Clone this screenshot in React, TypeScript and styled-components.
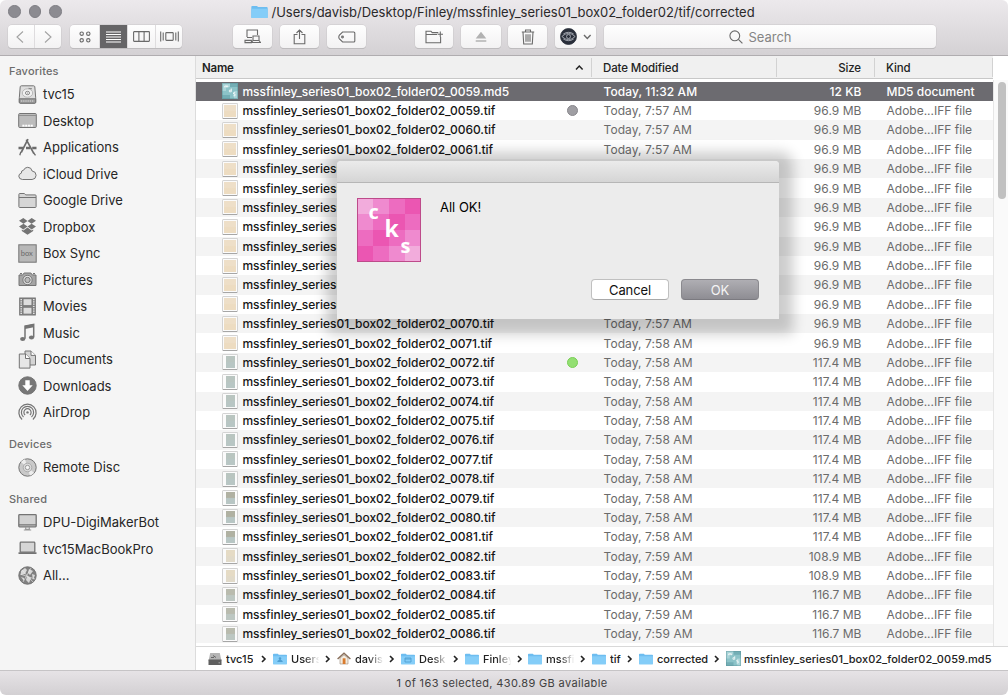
import React from "react";
import styled, { createGlobalStyle } from "styled-components";

const GlobalStyle = createGlobalStyle`
  * { box-sizing: border-box; }
  body { margin: 0; background: #fff; overflow: hidden; }
  svg { display: block; flex: none; }
`;

const Window = styled.div`
  position: relative;
  width: 1008px;
  height: 695px;
  display: flex;
  flex-direction: column;
  overflow: hidden;
  border-radius: 6px;
  background: #fff;
  font-family: Inter, "Liberation Sans", sans-serif;
  font-size: 13px;
  color: #262626;
  white-space: nowrap;
`;

const Chrome = styled.header`
  height: 56px;
  flex: none;
  border-bottom: 1px solid #b0adb0;
  background: linear-gradient(#ece9ec, #d4d1d4);
`;

const TitleRow = styled.div`
  display: flex;
  align-items: center;
  height: 24px;
  padding-left: 8px;
`;

const Lights = styled.div`
  display: flex;
  gap: 8px;
  width: 242.5px;
  padding-bottom: 1px;
`;

const Light = styled.i`
  width: 12.5px;
  height: 12.5px;
  border-radius: 50%;
  background: #8c8b91;
  border: 1px solid #7f7e84;
`;

const Title = styled.div`
  margin-left: 4px;
  font-size: 13px;
  letter-spacing: -0.01px;
  color: #2a292a;
`;

const Tools = styled.div`
  display: flex;
  height: 24px;
  padding: 1px 0 0 8px;
`;

const Group = styled.div<{ $before?: number }>`
  display: flex;
  height: 23px;
  margin-left: ${(p) => p.$before ?? 0}px;
  border-radius: 4px;
  background: linear-gradient(#fefefe, #f3f2f3);
  box-shadow: 0 0 0 0.5px #c9c7c9, 0 1px 0.5px #b3b1b3;
  overflow: hidden;
`;

const Tool = styled.button<{ $w: number; $on?: boolean; $dim?: boolean }>`
  width: ${(p) => p.$w}px;
  height: 23px;
  padding: 0;
  border: 0;
  border-left: 1px solid #dedcde;
  display: flex;
  align-items: center;
  justify-content: center;
  gap: 6px;
  color: ${(p) => (p.$on ? "#fff" : p.$dim ? "#a3a3a3" : "#6a6a6a")};
  background: ${(p) => (p.$on ? "#666567" : "transparent")};
  &:first-child { border-left: 0; }
`;

const Search = styled(Group)`
  width: 332px;
  align-items: center;
  justify-content: center;
  gap: 5px;
  padding-right: 19px;
  font-size: 13px;
  color: #858585;
`;

const Body = styled.div`
  display: flex;
  flex: 1;
  min-height: 0;
`;

const Sidebar = styled.nav`
  width: 196px;
  flex: none;
  border-right: 1px solid #dcdcdc;
  background: #f5f5f5;
  padding-top: 5px;
`;

const SideLabel = styled.div`
  height: 20px;
  line-height: 20px;
  padding-left: 9px;
  font-size: 11px;
  font-weight: 500;
  letter-spacing: 0.15px;
  color: #6c6c6c;
`;

const SideSection = styled.section`
  margin-bottom: 8.5px;
`;

const SideItem = styled.div`
  display: flex;
  align-items: center;
  height: 26.5px;
  padding: 0 0 0 18px;
  gap: 6px;
  font-size: 13px;
`;

const Main = styled.main`
  flex: 1;
  min-width: 0;
  display: flex;
  flex-direction: column;
`;

const HeadRow = styled.div`
  display: flex;
  height: 23px;
  margin-bottom: 1px;
  flex: none;
  width: 797px;
  align-items: center;
  background: #f0f0f0;
  border-bottom: 1px solid #c8c8c8;
  font-size: 11.5px;
  color: #222;
`;

const HeadCell = styled.div<{ $w: number; $left?: number; $right?: number; $bold?: boolean; $end?: boolean }>`
  width: ${(p) => p.$w}px;
  height: 19px;
  display: flex;
  align-items: center;
  justify-content: ${(p) => (p.$bold ? "space-between" : p.$end ? "flex-end" : "flex-start")};
  padding: 2px ${(p) => p.$right ?? 0}px 0 ${(p) => p.$left ?? 0}px;
  border-right: 1px solid #d2d2d2;
  font-weight: ${(p) => (p.$bold ? 600 : 500)};
  letter-spacing: ${(p) => (p.$bold ? -0.2 : -0.12)}px;
`;

const ListArea = styled.div`
  display: flex;
  flex: 1;
  min-height: 0;
  overflow: hidden;
`;

const List = styled.div`
  width: 797px;
  padding-top: 1.5px;
`;

const Row = styled.div<{ $selected?: boolean; $striped?: boolean }>`
  display: flex;
  align-items: center;
  height: 19.375px;
  font-size: 12px;
  letter-spacing: 0.08px;
  color: ${(p) => (p.$selected ? "#fff" : "#6b6b6b")};
  font-weight: ${(p) => (p.$selected ? 500 : 400)};
  background: ${(p) => (p.$selected ? "#6c6b70" : p.$striped ? "#f4f4f4" : "#fff")};
`;

const NameCell = styled.div<{ $selected?: boolean }>`
  display: flex;
  align-items: center;
  width: 407.5px;
  padding-left: 26px;
  gap: 4.5px;
  font-weight: 500;
  letter-spacing: -0.04px;
  color: ${(p) => (p.$selected ? "#fff" : "#161616")};
`;

const Tag = styled.i<{ $color: string; $edge: string }>`
  width: 11px;
  height: 11px;
  margin: 0 25.5px 0 auto;
  border-radius: 50%;
  border: 1px solid ${(p) => p.$edge};
  background: ${(p) => p.$color};
`;

const DateCell = styled.div`
  width: 160px;
`;

const SizeCell = styled.div`
  width: 98px;
  text-align: right;
  letter-spacing: 0.04px;
`;

const KindCell = styled.div`
  margin-left: 25px;
  letter-spacing: 0;
`;

const Thumb = styled.i`
  width: 16px;
  height: 16px;
  flex: none;
  display: flex;
  align-items: center;
  justify-content: center;
  background: #fbfbfb;
  border: 1px solid #d3d3d3;
  border-bottom-color: #a6a6a6;
  border-radius: 1.5px;
`;

const Page = styled.b<{ $w: number; $from: string; $to: string }>`
  width: ${(p) => p.$w}px;
  height: 12px;
  background: linear-gradient(${(p) => p.$from} 45%, ${(p) => p.$to} 55%);
`;

const ScrollTrack = styled.div`
  width: 15px;
  padding: 2px 3px 0 4px;
  border-left: 1px solid #e6e6e6;
  background: #fafafa;
`;

const ScrollThumb = styled.div`
  height: 117px;
  width: 8px;
  border-radius: 4px;
  background: #c1c1c1;
`;

const PathBar = styled.div`
  height: 24px;
  flex: none;
  display: flex;
  align-items: center;
  padding-left: 12px;
  border-top: 1px solid #d9d9d9;
  background: #fff;
  font-size: 11px;
  font-weight: 500;
  color: #222;
`;

const Crumb = styled.div<{ $w: number }>`
  width: ${(p) => p.$w}px;
  flex: none;
  display: flex;
  align-items: center;
  gap: 4px;
  &:last-child { gap: 3px; letter-spacing: 0.04px; }
`;

const CrumbText = styled.span<{ $fade?: boolean }>`
  flex: ${(p) => (p.$fade ? "0 0 30px" : "none")};
  overflow: hidden;
  mask-image: ${(p) => (p.$fade ? "linear-gradient(90deg, #000 45%, transparent 95%)" : "none")};
`;

const CrumbArrow = styled.span`
  margin: 0 6px 0 auto;
`;

const StatusBar = styled.footer`
  height: 25px;
  flex: none;
  display: flex;
  align-items: center;
  justify-content: center;
  padding-right: 4px;
  border-top: 1px solid #c6c4c6;
  background: linear-gradient(#e6e3e6, #d3d0d3);
  font-size: 11px;
  letter-spacing: 0.36px;
  color: #404040;
`;

const Dialog = styled.div`
  position: absolute;
  left: 337px;
  top: 161px;
  width: 442px;
  height: 158px;
  display: flex;
  flex-direction: column;
  border-radius: 4px 4px 0 0;
  background: #ececec;
  box-shadow: 2px 3px 13px 12px rgba(0, 0, 0, 0.2);
`;

const DialogBar = styled.div`
  height: 22px;
  flex: none;
  border-radius: 4px 4px 0 0;
  border-bottom: 1px solid #b6b6b6;
  background: linear-gradient(#ebebeb, #d5d5d5);
`;

const DialogContent = styled.div`
  display: flex;
  align-items: flex-start;
  gap: 19px;
  padding: 15px 20px 0;
`;

const Message = styled.div`
  padding-top: 1px;
  font-size: 13px;
  color: #000;
`;

const DialogActions = styled.div`
  display: flex;
  justify-content: flex-end;
  gap: 12px;
  margin: auto 20px 19px 0;
`;

const PushButton = styled.button<{ $primary?: boolean }>`
  width: 78px;
  height: 21px;
  padding: 0;
  border: 1px solid ${(p) => (p.$primary ? "#8a898e" : "#c0c0c0")};
  border-bottom-color: ${(p) => (p.$primary ? "#7b7a80" : "#a9a9a9")};
  border-radius: 4px;
  font: 400 13px Inter, sans-serif;
  letter-spacing: -0.1px;
  color: ${(p) => (p.$primary ? "#f4f4f4" : "#111")};
  background: ${(p) => (p.$primary ? "linear-gradient(#afaeb3, #8e8d93)" : "#fff")};
`;

const shades = ["#f2acdc", "#ef8acf", "#ed6cc0", "#eb56b2"];
const tiles = [0, 1, 2, 3, 1, 2, 3, 2, 2, 3, 2, 1, 3, 2, 1, 0];

const AppBadge = () => (
  <svg width="64" height="64" viewBox="0 0 64 64">
    {tiles.map((t, i) => (
      <rect key={i} x={(i % 4) * 16} y={Math.floor(i / 4) * 16} width="16" height="16" fill={shades[t]} shapeRendering="crispEdges" />
    ))}
    <rect x=".5" y=".5" width="63" height="63" fill="none" stroke="#bd4b8a" />
    <g fill="#fff" fontFamily="'Open Sans', sans-serif" fontWeight="700" fontSize="20">
      <text x="11.5" y="20.5">c</text>
      <text x="27.5" y="38.5" fontSize="23">k</text>
      <text x="43.5" y="54.5">s</text>
    </g>
  </svg>
);

const line = { fill: "none", stroke: "currentColor", strokeWidth: 1.1 };

const Folder = ({ mark }: { mark?: string }) => (
  <svg width={mark === "title" ? 17 : 14} height={mark === "title" ? 14 : 12} viewBox="0 0 14 12">
    <path d="M0 1.6Q0 .8.8.8h4l1 1h7.4q.8 0 .8.8v8q0 .6-.6.6H.6q-.6 0-.6-.6z" fill="#6dbdf0" />
    <path d="M0 3.2h14v7.5q0 .5-.6.5H.6q-.6 0-.6-.5z" fill="#84cdf8" />
    {mark === "user" && <path d="M7 4.2a1.2 1.2 0 0 1 .6 2.3l2 1.5v1H4.4v-1l2-1.5A1.2 1.2 0 0 1 7 4.2" fill="#4f9fd3" />}
    {mark === "desk" && <path d="M4 5h6v4H4zM4 6h6" fill="none" stroke="#4f9fd3" strokeWidth=".9" />}
  </svg>
);

const Md5 = ({ size = 16 }: { size?: number }) => (
  <svg width={size} height={size} viewBox="0 0 16 16">
    <path fill="#8cc3c8" d="M0 0h16v16H0z" />
    <path fill="#a9d4d8" d="M0 0h8v4H4v4H0zM12 8h4v8h-4z" />
    <path fill="#73aeb5" d="M8 0h8v4H8zM0 12h8v4H0z" />
    <path d="M2.8 4.5V3h3v1.5M4.3 3v1.5M9.3 5.5v3.3H7.4V7.2h1.9M13.2 9.7h-1.7V11h1.5v1.8h-1.7" fill="none" stroke="#fff" strokeWidth=".8" />
    <path fill="none" stroke="#5b949b" strokeWidth=".6" d="M.3.3h15.4v15.4H.3z" />
  </svg>
);

const DiskSmall = () => (
  <svg width="14" height="14" viewBox="0 0 14 14">
    <path d="M2.2 1h9.6l1.7 8H.5z" fill="#b4b4b4" />
    <path d="M.5 7.5h13V13H.5z" fill="#5f5f5f" />
    <path d="M5 3.5l3 2M3 5.5h3" stroke="#666" />
    <path d="M10.5 10.8h1.5" stroke="#aaa" />
  </svg>
);

const House = () => (
  <svg width="14" height="13" viewBox="0 0 14 13">
    <path d="M3 6v6h8V6L7 3z" fill="#f3ece0" stroke="#9b8c78" strokeWidth=".6" />
    <path d="M.6 7L7 1.2 13.4 7" fill="none" stroke="#8a705c" strokeWidth="1.5" />
    <path d="M5.7 6.3h2.8V12H5.7z" fill="#d97b2e" />
  </svg>
);

const SideGlyph = ({ name }: { name: string }) => {
  const g = "#747474";
  const common = { width: 19, height: 19, viewBox: "0 0 19 19", fill: "none", stroke: g, strokeWidth: 1 };
  switch (name) {
    case "disk":
      return <svg {...common}><path d="M3.4.8h12.2q1 0 1.2 1l.9 11v4.4q0 1-1 1H2.3q-1 0-1-1v-4.4l.9-11q.2-1 1.2-1z" fill="#dedede" /><path d="M1.3 13.8h16.4v3.4q0 1-1 1H2.3q-1 0-1-1z" fill="#9d9d9d" /><ellipse cx="9.5" cy="8" rx="5.2" ry="4.2" fill="#f0f0f0" stroke="#aaa" strokeWidth=".8" /><ellipse cx="9.5" cy="8" rx="2.1" ry="1.7" strokeWidth=".8" /><circle cx="9.5" cy="8" r=".5" fill={g} stroke="none" /><path d="M3 16h13" stroke="#ddd" strokeDasharray="1.2 1" /><path d="M10.5 3.3l3.5.5" stroke="#888" /></svg>;
    case "desktop":
      return <svg {...common}><rect x=".7" y="2.5" width="17.6" height="14" rx="1" fill="#bcbcbc" /><path d="M1 4.5h17" stroke="#8f8f8f" /><path d="M4 16v-2.2h11V16" fill="#cfcfcf" stroke="none" /><path d="M4.5 14.6h10.5" stroke="#fff" strokeWidth="1.8" strokeDasharray="1.8 1" /></svg>;
    case "apps":
      return <svg {...common} strokeWidth="1.7" stroke="#6c6c6c"><path d="M10 1.2L3.2 14.5M8.3 1.6l7.6 14" /><path d="M.5 10h4.7M8 10h4.2M14.2 10h4.3" strokeWidth="2.3" /><path d="M2.8 14l-1 3.2M15.7 15l1.8 2.3" strokeWidth="1.3" /></svg>;
    case "cloud":
      return <svg {...common}><path d="M4.4 15.5Q.9 15.2.8 12.2q.1-2.5 2.5-3Q3 6.4 5.7 6.1q.9-2.6 4-2.8 3.7 0 4.4 3.7 4 .5 4 4.3-.2 4-4 4.2z" fill="#e7e7e7" /></svg>;
    case "folder":
      return <svg {...common}><path d="M.9 15.7V3.4q0-.9.9-.9h4.6l1.3 1.4h9.5q.9 0 .9.9v10.9q0 .8-.8.8H1.7q-.8 0-.8-.8z" fill="#d6d6d6" /><path d="M1 6.5h17" /></svg>;
    case "dropbox":
      return <svg {...common} stroke="none" fill="#747474"><path d="M5.3 1l4.2 3-4 2.7L1 3.8zM13.7 1L18 3.8l-4.4 2.9-4.1-2.7zM1 9.6l4.5-2.9 4 2.9-4.2 2.8zM13.6 6.7L18 9.6l-4.3 2.8-4.2-2.8zM9.5 10.6l4.2 2.8 1.5-.8v1.5l-5.7 3.6-5.7-3.6v-1.5l1.5.8z" /></svg>;
    case "box":
      return <svg {...common}><rect x=".8" y=".8" width="17.4" height="17.4" fill="#b8b8b8" /><text x="2.8" y="12" fontSize="7.5" fontFamily="Lato, sans-serif" fill="#696969" stroke="none">box</text></svg>;
    case "camera":
      return <svg {...common}><path d="M1 5h3.6l1.5-2h6.8l1.5 2H18v10.5H1z" fill="#a5a5a5" /><circle cx="9.5" cy="10" r="4.6" fill="#ececec" /><circle cx="9.5" cy="10" r="2.7" fill="#b9b9b9" /><path d="M2 3.7h2M15 3.7h2" strokeWidth="1.2" /></svg>;
    case "film":
      return <svg {...common}><rect x="1.7" y="1" width="15.6" height="17" fill="#868686" /><path d="M5 1.7h9v7H5zM5 10.2h9v7H5z" fill="#ddd" /><path d="M3.2 2v15M15.8 2v15" stroke="#eee" strokeWidth="1.4" strokeDasharray="1.2 1.1" /></svg>;
    case "music":
      return <svg {...common} strokeWidth="1.5"><path d="M7 15.7V3.2l8.7-1.7v12.7" /><path d="M7 2.7l8.7-1.8v3.3L7 6z" fill={g} stroke="none" /><ellipse cx="4.7" cy="16" rx="2.6" ry="2.1" fill={g} stroke="none" /><ellipse cx="13.5" cy="14.5" rx="2.6" ry="2.1" fill={g} stroke="none" /></svg>;
    case "docs":
      return <svg {...common}><path d="M7 1h6l4.5 4.3V15H7z" fill="#d4d4d4" /><path d="M13 1v4.4h4.5" fill="#fff" /><path d="M1.3 4h6.2L12 8.4v9.7H1.3z" fill="#e6e6e6" /><path d="M7.5 4v4.5H12" fill="#fff" /></svg>;
    case "download":
      return <svg {...common}><circle cx="9.5" cy="9.5" r="8.7" fill="#777" /><path d="M7.3 4.2h4.4v5h3L9.5 15 4.3 9.2h3z" fill="#fff" stroke="none" /></svg>;
    case "airdrop":
      return <svg {...common} strokeWidth="1.2"><path d="M4.1 16.5a8.6 8.6 0 1 1 10.8 0" /><path d="M5.5 14a6.1 6.1 0 1 1 8 0" /><path d="M7.1 12a3.6 3.6 0 1 1 4.8 0" /><circle cx="9.5" cy="9.4" r="1.2" fill={g} stroke="none" /></svg>;
    case "disc":
      return <svg {...common}><circle cx="9.5" cy="9.5" r="8.7" fill="#c9c9c9" /><path d="M9.5 9.5L3 4a8.6 8.6 0 0 1 4-2.7zM9.5 9.5l6.6 5.3a8.6 8.6 0 0 1-4.2 2.8z" fill="#ededed" stroke="none" /><circle cx="9.5" cy="9.5" r="4.3" fill="#ddd" stroke="#aaa" /><circle cx="9.5" cy="9.5" r="2.2" fill="#f5f5f5" stroke="#999" /></svg>;
    case "display":
      return <svg {...common}><rect x=".8" y="1.6" width="17.4" height="12.2" rx=".8" fill="#d2d2d2" strokeWidth="1.3" /><path d="M1 11.8h17" strokeWidth="1.3" /><path d="M7.7 14v2.3h3.6V14M5.8 17h7.4" stroke="#999" strokeWidth="1.2" /></svg>;
    case "laptop":
      return <svg {...common}><rect x="2.2" y="3.2" width="14.6" height="10" rx=".8" fill="#d6d6d6" strokeWidth="1.3" /><path d="M.5 14.2h18" strokeWidth="1.8" /></svg>;
    default:
      return <svg {...common}><circle cx="9.5" cy="9.5" r="8.7" fill="#818181" /><path d="M3 5l4-3 2 2-2 4-4 1zM11 3l4 2-3 4-2-2zM9 10l4 2-2 5-3-3zM14 8l3 1-2 5zM3 11l3 1v3z" fill="#d8d8d8" stroke="none" /><path d="M2 8l15 5M13 2L5 16M4 4l11 12" stroke="#ededed" strokeWidth=".6" /></svg>;
  }
};

const favorites = [
  ["disk", "tvc15"], ["desktop", "Desktop"], ["apps", "Applications"], ["cloud", "iCloud Drive"],
  ["folder", "Google Drive"], ["dropbox", "Dropbox"], ["box", "Box Sync"], ["camera", "Pictures"],
  ["film", "Movies"], ["music", "Music"], ["docs", "Documents"], ["download", "Downloads"], ["airdrop", "AirDrop"],
];
const sections: [string, string[][]][] = [
  ["Favorites", favorites],
  ["Devices", [["disc", "Remote Disc"]]],
  ["Shared", [["display", "DPU-DigiMakerBot"], ["laptop", "tvc15MacBookPro"], ["globe", "All..."]]],
];

const prefix = "mssfinley_series01_box02_folder02_00";
const files = Array.from({ length: 28 }, (_, i) => {
  const n = 59 + i;
  return {
    name: `${prefix}${n}.tif`,
    date: `Today, ${n < 71 ? "7:57" : n < 82 ? "7:58" : "7:59"} AM`,
    size: n < 72 ? "96.9 MB" : n < 82 ? "117.4 MB" : n < 84 ? "108.9 MB" : "116.7 MB",
    tag: n === 59 ? ["#9f9ea3", "#88878c"] : n === 72 ? ["#93df72", "#79cf55"] : null,
    w: n < 72 ? 12 : 9,
    from: n < 72 ? "#eedfc8" : n < 79 ? "#b9c5c0" : n < 82 ? "#b0b1a2" : n < 84 ? "#e5dbc5" : "#b9bbae",
    to: n < 72 ? "#eddcc1" : n < 82 ? "#b8c6c4" : n < 84 ? "#e1dac9" : "#bdc7c2",
  };
});

const Chevron = ({ d, w = 8, h = 8, s = 1.5 }: { d: string; w?: number; h?: number; s?: number }) => (
  <svg width={w} height={h} viewBox={`0 0 ${w} ${h}`} fill="none" stroke="currentColor" strokeWidth={s}><path d={d} /></svg>
);

const crumbs: [React.ReactNode, string, number, boolean][] = [
  [<DiskSmall />, "tvc15", 65, false],
  [<Folder mark="user" />, "Users", 64, true],
  [<House />, "davis", 64, true],
  [<Folder mark="desk" />, "Desk", 64, true],
  [<Folder />, "Finley", 63, true],
  [<Folder />, "mssfi", 64, true],
  [<Folder />, "tif", 47, false],
  [<Folder />, "corrected", 87, false],
  [<Md5 size={15} />, `${prefix}59.md5`, 270, false],
];

export default function App() {
  return (
    <Window>
      <GlobalStyle />
      <Chrome>
        <TitleRow>
          <Lights><Light /><Light /><Light /></Lights>
          <Folder mark="title" />
          <Title>/Users/davisb/Desktop/Finley/mssfinley_series01_box02_folder02/tif/corrected</Title>
        </TitleRow>
        <Tools>
          <Group>
            <Tool $w={26} $dim><Chevron d="M8 1.5L2 7l6 5.5" w={12} h={14} s={1.1} /></Tool>
            <Tool $w={27} $dim><Chevron d="M3 1.5L9 7l-6 5.5" w={12} h={14} s={1.1} /></Tool>
          </Group>
          <Group $before={9}>
            <Tool $w={29}>
              <svg width="12" height="12" viewBox="0 0 12 12" {...line}><circle cx="2.7" cy="2.7" r="1.7" /><circle cx="9.3" cy="2.7" r="1.7" /><circle cx="2.7" cy="9.3" r="1.7" /><circle cx="9.3" cy="9.3" r="1.7" /></svg>
            </Tool>
            <Tool $w={28} $on>
              <svg width="15" height="12" viewBox="0 0 15 12" {...line}><path d="M0 1h15M0 3.5h15M0 6h15M0 8.5h15M0 11h15" /></svg>
            </Tool>
            <Tool $w={28}>
              <svg width="17" height="11" viewBox="0 0 17 11" {...line}><rect x=".6" y=".6" width="15.8" height="9.8" rx=".6" /><path d="M5.9.6v9.8M11.1.6v9.8" /></svg>
            </Tool>
            <Tool $w={27}>
              <svg width="19" height="11" viewBox="0 0 19 11" {...line}><path d="M.7.5v10M3.2 1.5v8M15.8 1.5v8M18.3.5v10" /><rect x="5.8" y="1.6" width="7.4" height="7.8" rx=".6" /></svg>
            </Tool>
          </Group>
          <Group $before={51}><Tool $w={39}>
            <svg width="17" height="15" viewBox="0 0 17 15" {...line}><path d="M3 8V1h10.5v5M3 8.5H8M1 11.4h6.4v2.2H1z" /><path d="M9 7h6v4.5H9zM7.5 13.5h9l-1.5-2H9z" /></svg>
          </Tool></Group>
          <Group $before={8}><Tool $w={39}>
            <svg width="13" height="16" viewBox="0 0 13 16" {...line}><path d="M4.5 5.5H1.2v9.3h10.6V5.5H8.5M6.5 10V1M3.5 4l3-3 3 3" /></svg>
          </Tool></Group>
          <Group $before={8}><Tool $w={39}>
            <svg width="18" height="12" viewBox="0 0 18 12" {...line}><path d="M4.6 1h11.2q1 0 1 1v8q0 1-1 1H4.6L1.2 7.6Q.4 6 1.2 4.4z" /><circle cx="4.5" cy="6" r=".9" /></svg>
          </Tool></Group>
          <Group $before={49}><Tool $w={38}>
            <svg width="18" height="14" viewBox="0 0 18 14" {...line}><path d="M13.3 2.6H7.2L6 1.2H1v11.5h14.6V7M1 4.5h11M15.3 1.5v5.4M12.6 4.2H18" /></svg>
          </Tool></Group>
          <Group $before={8}><Tool $w={40}>
            <svg width="12" height="12" viewBox="0 0 12 12" fill="#b2b2b2"><path d="M6 .8l5.3 6.7H.7zM.7 9.3h10.6v1.5H.7z" /></svg>
          </Tool></Group>
          <Group $before={7}><Tool $w={39}>
            <svg width="14" height="16" viewBox="0 0 14 16" {...line}><path d="M.8 3h12.4M4.5 3V1h5v2M2 3l.7 12h8.6L12 3M5 5.3v7.4M7 5.3v7.4M9 5.3v7.4" /></svg>
          </Tool></Group>
          <Group $before={8}><Tool $w={41}>
            <svg width="17" height="17" viewBox="0 0 17 17" fill="none" stroke="#b9bdc5" strokeWidth=".8"><circle cx="8.5" cy="8.5" r="8" fill="#292e3a" stroke="#292e3a" /><path d="M1.8 8.5q6.7-6.2 13.4 0-6.7 6.2-13.4 0zM3.3 6Q8.5 2.6 13.7 6M3.3 11q5.2 3.4 10.4 0" /><circle cx="8.5" cy="8.5" r="2" /></svg>
            <Chevron d="M1 2l3.3 3.5L7.6 2" w={9} h={7} s={1.4} />
          </Tool></Group>
          <Search $before={8}>
            <svg width="14" height="14" viewBox="0 0 14 14" fill="none" stroke="#6a6a6a" strokeWidth="1.1"><circle cx="5.8" cy="5.8" r="4.9" /><path d="M9.4 9.4l4 4" /></svg>
            Search
          </Search>
        </Tools>
      </Chrome>
      <Body>
        <Sidebar>
          {sections.map(([label, items]) => (
            <SideSection key={label}>
              <SideLabel>{label}</SideLabel>
              {items.map(([icon, text]) => (
                <SideItem key={text}><SideGlyph name={icon} />{text}</SideItem>
              ))}
            </SideSection>
          ))}
        </Sidebar>
        <Main>
          <HeadRow>
            <HeadCell $w={396} $left={6} $right={7} $bold>Name<Chevron d="M1 5.5L4.3 2l3.3 3.5" w={9} h={8} /></HeadCell>
            <HeadCell $w={185} $left={11}>Date Modified</HeadCell>
            <HeadCell $w={98} $right={13} $end>Size</HeadCell>
            <HeadCell $w={118} $left={11}>Kind</HeadCell>
          </HeadRow>
          <ListArea>
            <List>
              <Row $selected>
                <NameCell $selected><Md5 />{prefix}59.md5</NameCell>
                <DateCell>Today, 11:32 AM</DateCell>
                <SizeCell>12 KB</SizeCell>
                <KindCell>MD5 document</KindCell>
              </Row>
              {files.map((f, i) => (
                <Row key={f.name} $striped={i % 2 === 1}>
                  <NameCell>
                    <Thumb><Page $w={f.w} $from={f.from} $to={f.to} /></Thumb>
                    {f.name}
                    {f.tag && <Tag $color={f.tag[0]} $edge={f.tag[1]} />}
                  </NameCell>
                  <DateCell>{f.date}</DateCell>
                  <SizeCell>{f.size}</SizeCell>
                  <KindCell>Adobe...IFF file</KindCell>
                </Row>
              ))}
            </List>
            <ScrollTrack><ScrollThumb /></ScrollTrack>
          </ListArea>
          <PathBar>
            {crumbs.map(([icon, text, w, fade], i) => (
              <Crumb key={i} $w={w}>
                {icon}
                <CrumbText $fade={fade}>{text}</CrumbText>
                {i < 8 && <CrumbArrow><Chevron d="M1 1l3 3-3 3" w={6} h={8} s={1.6} /></CrumbArrow>}
              </Crumb>
            ))}
          </PathBar>
        </Main>
      </Body>
      <StatusBar>1 of 163 selected, 430.89 GB available</StatusBar>
      <Dialog role="dialog">
        <DialogBar />
        <DialogContent>
          <AppBadge />
          <Message>All OK!</Message>
        </DialogContent>
        <DialogActions>
          <PushButton>Cancel</PushButton>
          <PushButton $primary>OK</PushButton>
        </DialogActions>
      </Dialog>
    </Window>
  );
}
